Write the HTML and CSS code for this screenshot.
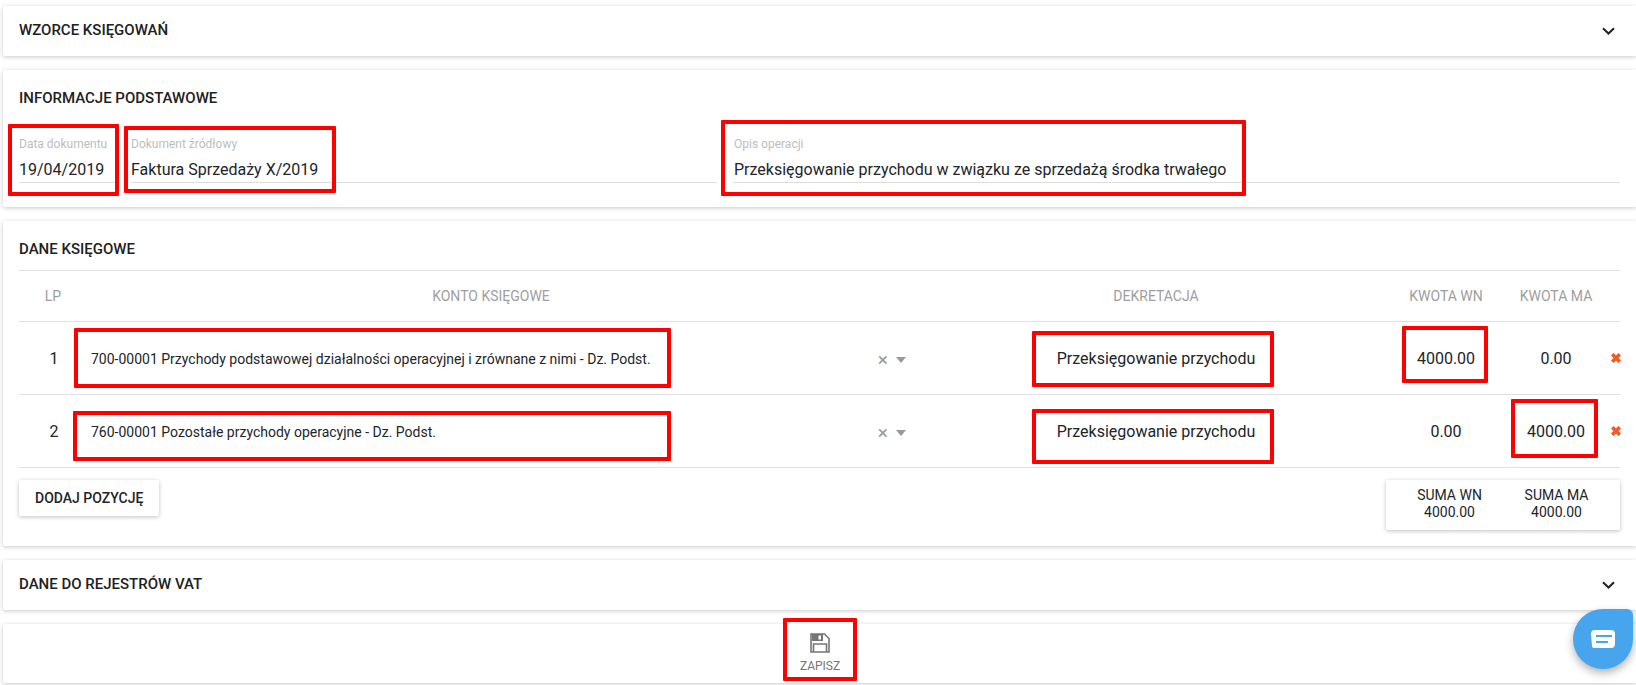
FILE: index.html
```html
<!DOCTYPE html>
<html>
  <head>
    <meta http-equiv="content-type" content="text/html; charset=UTF-8">
    <title>Dokument księgowy</title>
    <link rel="stylesheet" href="styles.css">
  </head>
<body>
  <div class="card card-fold">
    <h3 class="title">Wzorce księgowań</h3>
    <svg class="chevron" viewBox="0 0 13 8"><path d="M1 1.200 6.500 6.500 12 1.200"/></svg>
  </div>

  <div class="card card-info">
    <h3 class="title">Informacje podstawowe</h3>
    <div class="fields">
      <div class="field">
        <label>Data dokumentu</label>
        <div class="value">19/04/2019</div>
      </div>
      <div class="field">
        <label>Dokument źródłowy</label>
        <div class="value">Faktura Sprzedaży X/2019</div>
      </div>
      <div class="field">
        <label>Opis operacji</label>
        <div class="value">Przeksięgowanie przychodu w związku ze sprzedażą środka trwałego</div>
      </div>
    </div>
  </div>

  <div class="card card-data">
    <h3 class="title">Dane księgowe</h3>
    <div class="row row-head">
      <div class="head-lp">LP</div>
      <div class="head-account">Konto księgowe</div>
      <div>Dekretacja</div>
      <div>Kwota WN</div>
      <div>Kwota MA</div>
      <div></div>
    </div>
    <div class="row">
      <div>1</div>
      <div class="account">
        <span class="account-name">700-00001 Przychody podstawowej działalności operacyjnej i zrównane z nimi - Dz. Podst.</span>
        <span class="clear">×</span>
        <span class="arrow"></span>
      </div>
      <div>Przeksięgowanie przychodu</div>
      <div>4000.00</div>
      <div>0.00</div>
      <svg class="remove" viewBox="0 0 10 10"><path d="M1.200 1.200 8.800 8.800M8.800 1.200 1.200 8.800"/></svg>
    </div>
    <div class="row">
      <div>2</div>
      <div class="account">
        <span class="account-name">760-00001 Pozostałe przychody operacyjne - Dz. Podst.</span>
        <span class="clear">×</span>
        <span class="arrow"></span>
      </div>
      <div>Przeksięgowanie przychodu</div>
      <div>0.00</div>
      <div>4000.00</div>
      <svg class="remove" viewBox="0 0 10 10"><path d="M1.200 1.200 8.800 8.800M8.800 1.200 1.200 8.800"/></svg>
    </div>
    <div class="table-foot">
      <div class="button">Dodaj pozycję</div>
      <div class="sum">
        <div>SUMA WN<br>4000.00</div>
        <div>SUMA MA<br>4000.00</div>
      </div>
    </div>
  </div>

  <div class="card card-fold">
    <h3 class="title">Dane do rejestrów VAT</h3>
    <svg class="chevron" viewBox="0 0 13 8"><path d="M1 1.200 6.500 6.500 12 1.200"/></svg>
  </div>

  <div class="card card-save">
    <svg class="save-icon" viewBox="0 0 20 20">
      <path class="save-line" d="M1 1h13.500L19 5.500V19H1z"/>
      <path class="save-fill" fill-rule="evenodd" d="M2 1h11v7H2zM8.500 2.500v4h2.500v-4z"/>
      <path class="save-line" d="M3.500 19v-8h13v8"/>
    </svg>
    <div class="save-text">ZAPISZ</div>
  </div>

  <!-- red annotations -->
  <div class="mark mark-date"></div>
  <div class="mark mark-source"></div>
  <div class="mark mark-desc"></div>
  <div class="mark mark-acc1"></div>
  <div class="mark mark-acc2"></div>
  <div class="mark mark-dek1"></div>
  <div class="mark mark-dek2"></div>
  <div class="mark mark-wn"></div>
  <div class="mark mark-ma"></div>
  <div class="mark mark-save"></div>

  <div class="chat">
    <svg viewBox="0 0 24 18" width="24" height="18">
      <path class="chat-body" d="M4 0h16a4 4 0 0 1 4 4v10a4 4 0 0 1-4 4H3a2 2 0 0 1-2-2l-1-12a4 4 0 0 1 4-4z"/>
      <path class="chat-line" d="M5 6h16M5 12h12"/>
    </svg>
  </div>
</body>
</html>
```

FILE: styles.css
```css
html {
  background: #fff;
}

body {
  margin: 0;
  padding: 6px 0 0 3px;
  height: 685px;
  box-sizing: border-box;
  overflow: hidden;
  position: relative;
  font-family: Roboto, sans-serif;
  color: #212529;
}

.card {
  background: #fff;
  border-radius: 2px 0 0 2px;
  box-shadow: 0 1px 4px rgba(0, 0, 0, 0.22);
  margin-bottom: 14px;
  box-sizing: border-box;
  padding: 0 16px;
}

.title {
  margin: 0;
  font-size: 15px;
  font-weight: 500;
  line-height: 20px;
  text-transform: uppercase;
  color: #212121;
}

.card-fold {
  height: 50px;
  padding-bottom: 2px;
  display: flex;
  align-items: center;
  justify-content: space-between;
}

.chevron {
  width: 13px;
  height: 8px;
  margin: 1px 5px 0 0;
}
.chevron path {
  fill: none;
  stroke: #222;
  stroke-width: 2;
}

/* informacje podstawowe */
.card-info {
  height: 137px;
  padding-top: 18px;
}

.fields {
  display: grid;
  grid-template-columns: 96px 586px 1fr;
  column-gap: 16px;
  margin-top: 29px;
}

.field:last-child {
  margin-left: 1px;
}

.field label {
  display: block;
  font-size: 12px;
  line-height: 14px;
  color: #bdbdbd;
}

.value {
  margin-top: 7px;
  font-size: 16px;
  line-height: 24px;
  border-bottom: 1px solid #ddd;
  white-space: nowrap;
}

/* dane ksiegowe */
.card-data {
  height: 325px;
  padding-top: 18px;
}
.card-data .title {
  margin-bottom: 11px;
}

.row {
  display: grid;
  grid-template-columns: 70px 832px 470px 110px 110px 9px;
  align-items: center;
  height: 73px;
  border-top: 1px solid #e0e0e0;
  box-sizing: border-box;
  text-align: center;
  font-size: 16px;
}

.row-head {
  height: 51px;
  font-size: 14px;
  text-transform: uppercase;
  color: #9e9e9e;
}

.head-lp {
  padding-right: 2px;
}

.head-account {
  padding-right: 28px;
}

.account {
  display: flex;
  align-items: center;
  text-align: left;
  padding: 0 15px 0 2px;
  font-size: 14px;
}
.account-name {
  flex: 1;
  margin-top: 1px;
}

.clear {
  font-size: 19px;
  color: #999;
  line-height: 16px;
  margin: 4px 8px 0 0;
}

.arrow {
  width: 0;
  height: 0;
  margin-top: 4px;
  border: 5px solid transparent;
  border-top: 6px solid #999;
  border-bottom: 0;
}

.remove {
  width: 10px;
  height: 10px;
}
.remove path {
  fill: none;
  stroke: #f8591f;
  stroke-width: 3.600;
}

.table-foot {
  display: flex;
  justify-content: space-between;
  align-items: flex-start;
  border-top: 1px solid #e0e0e0;
  padding-top: 12px;
}

.button {
  height: 36px;
  line-height: 36px;
  padding: 0 16px;
  font-size: 14px;
  font-weight: 500;
  text-transform: uppercase;
  border-radius: 2px;
  box-shadow: 0 1px 4px rgba(0, 0, 0, 0.25);
}

.sum {
  display: flex;
  width: 234px;
  height: 50px;
  box-sizing: border-box;
  padding: 7px 10px;
  text-align: center;
  font-size: 14px;
  line-height: 17px;
  border-radius: 2px;
  box-shadow: 0 1px 4px rgba(0, 0, 0, 0.25);
}
.sum div {
  flex: 1;
}

/* zapisz */
.card-save {
  height: 59px;
  margin: 0;
  padding-top: 9px;
  display: flex;
  flex-direction: column;
  align-items: center;
}

.save-icon {
  width: 20px;
  height: 20px;
}
.save-line {
  fill: none;
  stroke: #757575;
  stroke-width: 1.600;
}
.save-fill {
  fill: #757575;
}

.save-text {
  margin: 6px 0 0 1px;
  font-size: 12px;
  line-height: 14px;
  color: #757575;
}

/* czerwone ramki na zrzucie */
.mark {
  position: absolute;
  box-sizing: border-box;
  border: 4px solid #f00;
  border-radius: 1px;
}
.mark-date { left: 8px; top: 124px; width: 111px; height: 72px; }
.mark-source { left: 124px; top: 126px; width: 212px; height: 67px; }
.mark-desc { left: 721px; top: 120px; width: 525px; height: 76px; }
.mark-acc1 { left: 74px; top: 328px; width: 597px; height: 60px; }
.mark-acc2 { left: 73px; top: 411px; width: 598px; height: 50px; }
.mark-dek1 { left: 1032px; top: 331px; width: 242px; height: 56px; }
.mark-dek2 { left: 1032px; top: 409px; width: 242px; height: 55px; }
.mark-wn { left: 1402px; top: 326px; width: 86px; height: 57px; }
.mark-ma { left: 1511px; top: 399px; width: 87px; height: 59px; }
.mark-save { left: 783px; top: 618px; width: 74px; height: 63px; }

.chat {
  position: absolute;
  left: 1573px;
  top: 609px;
  width: 60px;
  height: 60px;
  border-radius: 50% 6px 50% 50%;
  background: #47a5ee;
  box-shadow: 0 4px 8px rgba(0, 0, 0, 0.3);
  display: flex;
  align-items: center;
  justify-content: center;
}
.chat-body {
  fill: #fff;
}
.chat-line {
  fill: none;
  stroke: #47a5ee;
  stroke-width: 2;
}
```
